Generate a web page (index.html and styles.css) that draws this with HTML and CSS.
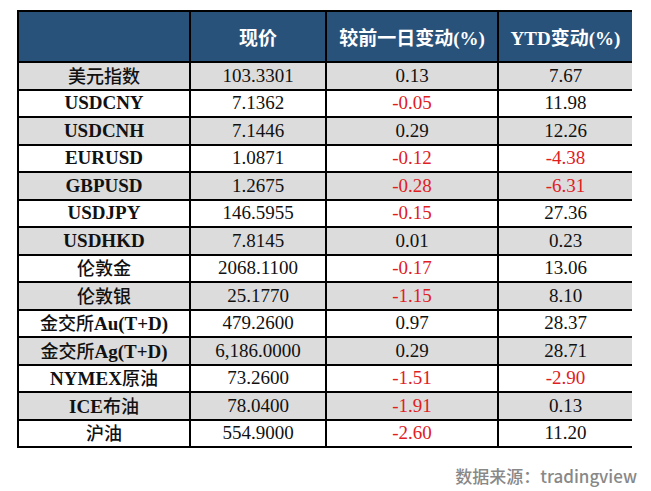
FILE: index.html
```html
<!DOCTYPE html>
<html lang="zh-CN">
<head>
<meta charset="utf-8">
<title>汇率与商品变动</title>
<link rel="stylesheet" href="styles.css">
</head>
<body>
<div class="page">
  <table class="quotes">
    <colgroup>
      <col class="c-name"><col class="c-price"><col class="c-day"><col class="c-ytd">
    </colgroup>
    <thead>
      <tr>
        <th></th>
        <th>现价</th>
        <th>较前一日变动(%)</th>
        <th>YTD变动(%)</th>
      </tr>
    </thead>
    <tbody>
      <tr class="alt"><td class="name"><span class="zh">美元指数</span></td><td>103.3301</td><td>0.13</td><td>7.67</td></tr>
      <tr><td class="name">USDCNY</td><td>7.1362</td><td class="neg">-0.05</td><td>11.98</td></tr>
      <tr class="alt"><td class="name">USDCNH</td><td>7.1446</td><td>0.29</td><td>12.26</td></tr>
      <tr><td class="name">EURUSD</td><td>1.0871</td><td class="neg">-0.12</td><td class="neg">-4.38</td></tr>
      <tr class="alt"><td class="name">GBPUSD</td><td>1.2675</td><td class="neg">-0.28</td><td class="neg">-6.31</td></tr>
      <tr><td class="name">USDJPY</td><td>146.5955</td><td class="neg">-0.15</td><td>27.36</td></tr>
      <tr class="alt"><td class="name">USDHKD</td><td>7.8145</td><td>0.01</td><td>0.23</td></tr>
      <tr><td class="name"><span class="zh">伦敦金</span></td><td>2068.1100</td><td class="neg">-0.17</td><td>13.06</td></tr>
      <tr class="alt"><td class="name"><span class="zh">伦敦银</span></td><td>25.1770</td><td class="neg">-1.15</td><td>8.10</td></tr>
      <tr><td class="name"><span class="zh">金交所</span>Au(T+D)</td><td>479.2600</td><td>0.97</td><td>28.37</td></tr>
      <tr class="alt"><td class="name"><span class="zh">金交所</span>Ag(T+D)</td><td>6,186.0000</td><td>0.29</td><td>28.71</td></tr>
      <tr><td class="name">NYMEX<span class="zh">原油</span></td><td>73.2600</td><td class="neg">-1.51</td><td class="neg">-2.90</td></tr>
      <tr class="alt"><td class="name">ICE<span class="zh">布油</span></td><td>78.0400</td><td class="neg">-1.91</td><td>0.13</td></tr>
      <tr><td class="name"><span class="zh">沪油</span></td><td>554.9000</td><td class="neg">-2.60</td><td>11.20</td></tr>
    </tbody>
  </table>
  <div class="source">数据来源：tradingview</div>
</div>
</body>
</html>
```

FILE: styles.css
```css
html, body {
  margin: 0;
  padding: 0;
  background: #ffffff;
}

.page {
  padding: 10px 0 0 17px;
  width: 634px;
  font-family: "Liberation Serif", "Noto Sans CJK SC", serif;
}

.quotes {
  border-collapse: collapse;
  table-layout: fixed;
  width: 615px;
}

.c-name { width: 172px; }
.c-price { width: 136px; }
.c-day { width: 172px; }
.c-ytd { width: 134px; }

.quotes th {
  height: 49px;
  background: #29527a;
  color: #ffffff;
  font-family: "Liberation Serif", "Noto Sans CJK SC", serif;
  font-weight: bold;
  font-size: 19px;
  text-align: center;
  border: 2px solid #000;
  padding: 0;
}

.quotes th:last-child {
  border-right: none;
}

.quotes td {
  height: 25.5px;
  padding: 0;
  text-align: center;
  font-size: 19px;
  line-height: 22px;
  color: #111111;
  border: 2px solid #000;
}

.quotes td:last-child {
  border-right: none;
}

.quotes tr.alt td {
  background: #dcdcdc;
}

.quotes td.name {
  font-weight: bold;
}

.quotes td.name .zh {
  font-family: "Noto Sans CJK SC", sans-serif;
  font-weight: 500;
  font-size: 18px;
}

.quotes td.neg {
  color: #e0201f;
}

.source {
  margin-top: 15px;
  padding-right: 14px;
  text-align: right;
  font-family: "Noto Sans CJK SC", "Noto Sans", sans-serif;
  font-weight: 500;
  font-size: 17px;
  color: #888888;
}
```
